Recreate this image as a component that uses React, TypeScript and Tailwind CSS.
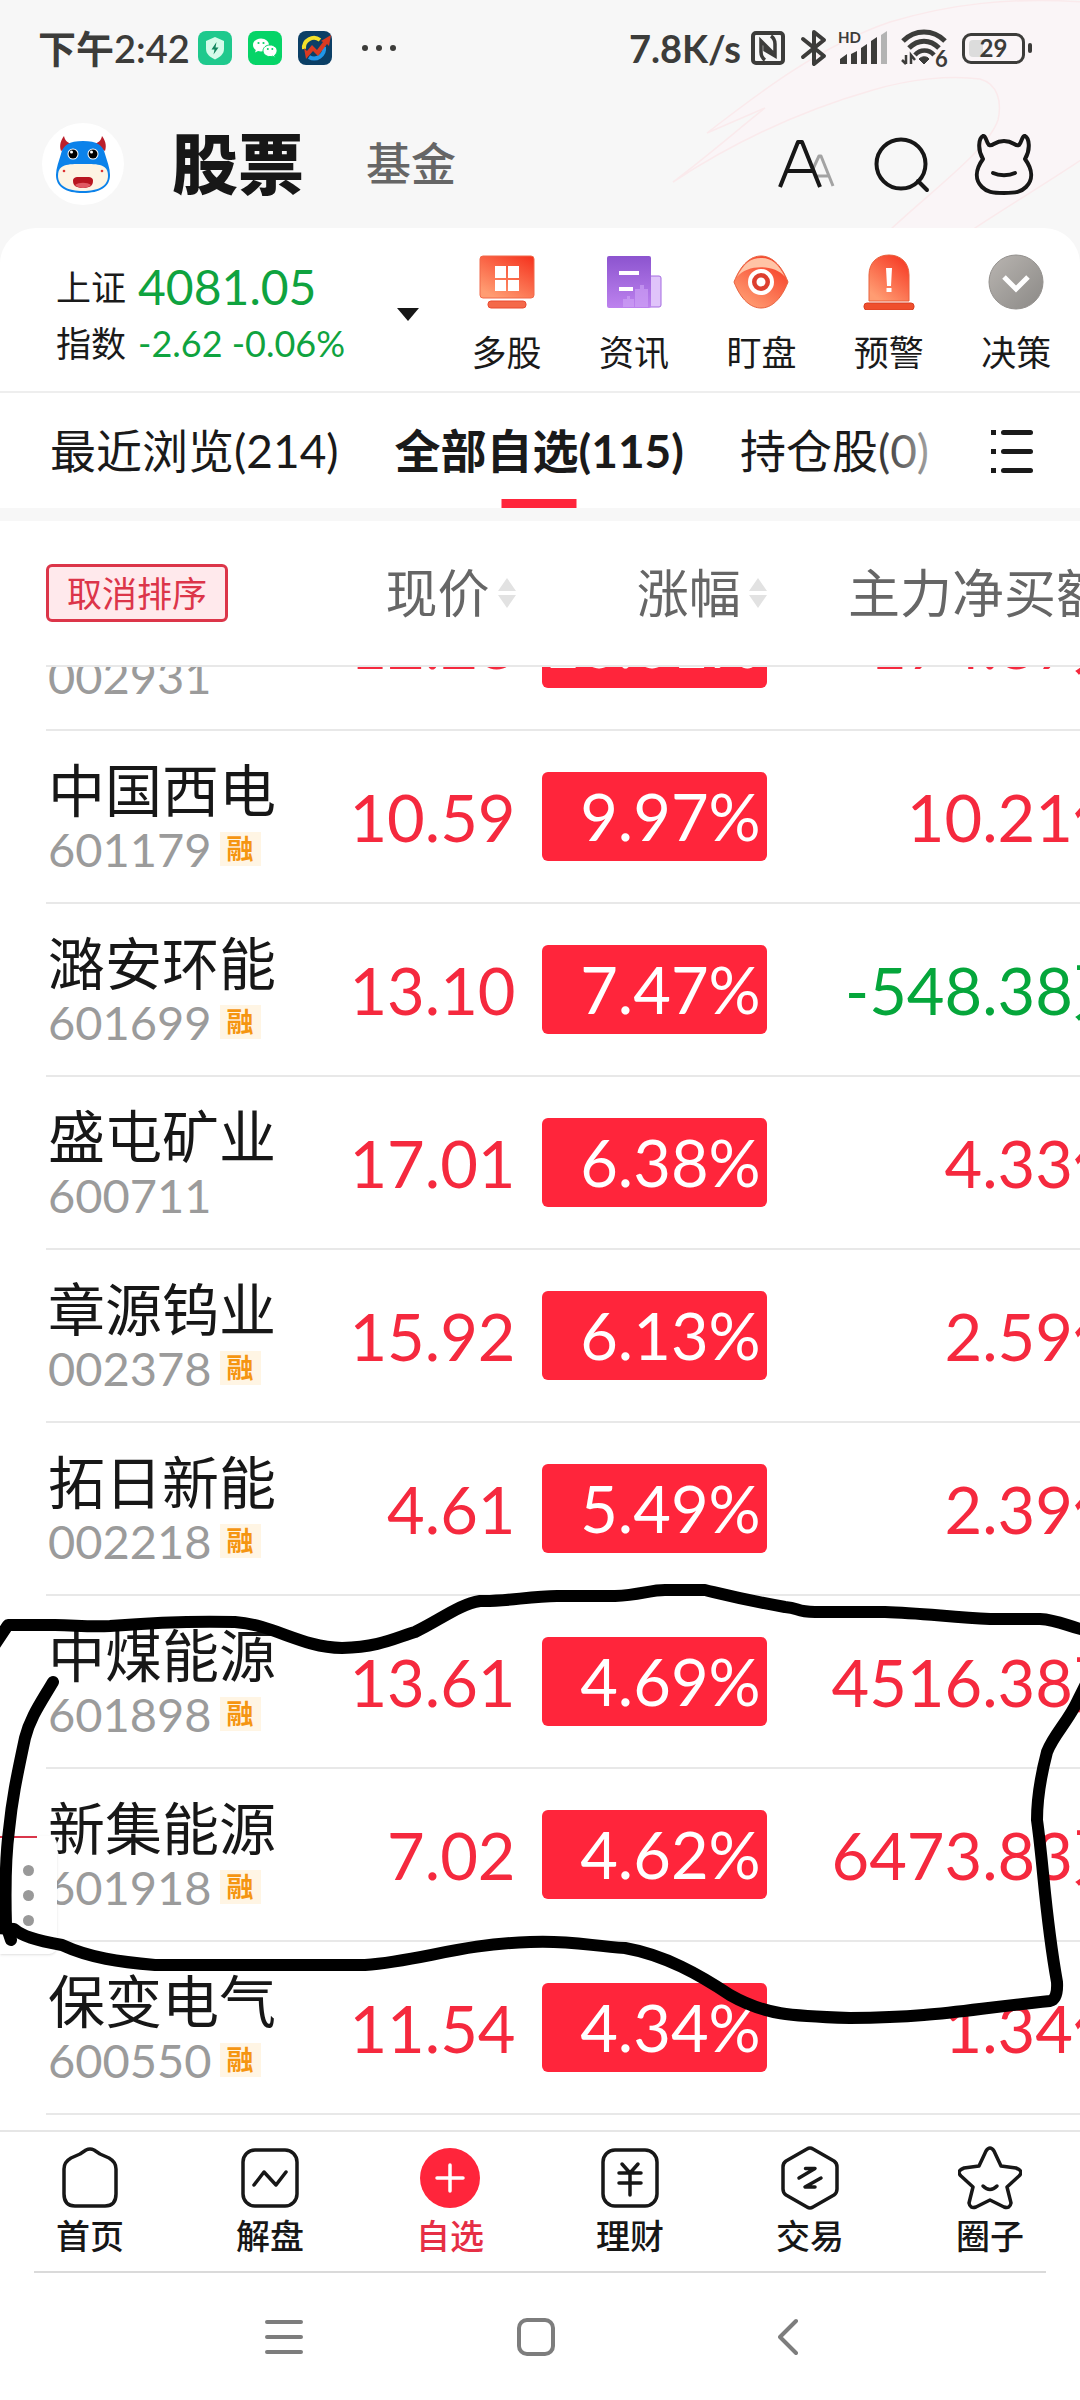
import { useState } from "react";
import type { ReactNode } from "react";
import clsx from "clsx";

type Stock = {
  name: string;
  code: string;
  margin: boolean;
  price: string;
  change: string;
  flow: string;
  out?: boolean;
};

const scrolledStock: Stock = {
  name: "",
  code: "002931",
  margin: false,
  price: "12.28",
  change: "10.01%",
  flow: "174.87万",
};

const stocks: Stock[] = [
  { name: "中国西电", code: "601179", margin: true, price: "10.59", change: "9.97%", flow: "10.21亿" },
  { name: "潞安环能", code: "601699", margin: true, price: "13.10", change: "7.47%", flow: "-548.38万", out: true },
  { name: "盛屯矿业", code: "600711", margin: false, price: "17.01", change: "6.38%", flow: "4.33亿" },
  { name: "章源钨业", code: "002378", margin: true, price: "15.92", change: "6.13%", flow: "2.59亿" },
  { name: "拓日新能", code: "002218", margin: true, price: "4.61", change: "5.49%", flow: "2.39亿" },
  { name: "中煤能源", code: "601898", margin: true, price: "13.61", change: "4.69%", flow: "4516.38万" },
  { name: "新集能源", code: "601918", margin: true, price: "7.02", change: "4.62%", flow: "6473.83万" },
  { name: "保变电气", code: "600550", margin: true, price: "11.54", change: "4.34%", flow: "1.34亿" },
];

const HeaderArt = () => (
  <svg className="absolute top-0 right-0" width="412" height="228" viewBox="668 0 412 228" fill="none">
    <path
      d="M1084 2C1010-3 950 4 890 22C820 46 760 92 707 133L765 108C735 132 705 158 673 182C740 138 810 108 873 90C910 79 950 75 980 79C998 84 1002 102 998 120C988 150 930 192 890 230H972C1010 205 1045 184 1084 158Z"
      fill="#faf5f7"
      stroke="#faeaec"
      strokeWidth="1.5"
    />
  </svg>
);

const StatusBar = () => (
  <div className="relative flex h-24 items-center justify-between pr-[48px] pl-[38px] font-bold text-[#3c3c3a]">
    <div className="flex items-center">
      <span className="text-[38px] leading-[40px] font-semibold">下午2:42</span>
      <svg className="ml-2" width="34" height="34" viewBox="0 0 34 34">
        <rect width="34" height="34" rx="8" fill="#1fc98d" />
        <path d="M17 6l9 4v8c0 5-4 8-9 10.500c-5-2.500-9-5.500-9-10.500v-8z" fill="#d5fbea" />
        <path d="M18.500 11l-5 7.500h3l-1 5l5-7h-3z" fill="#12855e" />
      </svg>
      <svg className="ml-4" width="34" height="34" viewBox="0 0 34 34">
        <rect width="34" height="34" rx="8" fill="#06d467" />
        <path d="M13 7.500c-4.600 0-8 2.900-8 6.500c0 2 1 3.700 2.800 4.900l-.8 2.600l3-1.500c1 .3 2 .4 3 .4c4.600 0 8-2.900 8-6.400s-3.400-6.500-8-6.500z" fill="#fff" />
        <path d="M22 14c-4 0-7 2.600-7 5.800s3 5.800 7 5.800c1 0 1.800-.1 2.600-.4l2.700 1.300l-.7-2.300c1.600-1.100 2.500-2.600 2.500-4.400c0-3.200-3.100-5.800-7.100-5.800z" fill="#fff" stroke="#06d467" />
        <g fill="#06d467">
          <circle cx="10.500" cy="12" r="1.100" />
          <circle cx="15.500" cy="12" r="1.100" />
          <circle cx="19.800" cy="18" r="1" />
          <circle cx="24.300" cy="18" r="1" />
        </g>
      </svg>
      <svg className="ml-4" width="34" height="34" viewBox="0 0 34 34">
        <rect width="34" height="34" rx="8" fill="#0b3f66" />
        <path d="M6 18a10 10 0 0 1 16-9" fill="none" stroke="#f3e12b" strokeWidth="4" />
        <path d="M26 16a10 10 0 0 1-15 10" fill="none" stroke="#2196e8" strokeWidth="4" />
        <path d="M6 17l3 3l5-6l5 5l6-8l-2-1l10-6l-2 11l-2-2l-9 12l-5-5l-7 8z" fill="#d93a22" />
      </svg>
      <svg className="ml-[30px]" width="34" height="8" viewBox="0 0 34 8" fill="#3c3c3a">
        <circle cx="3" cy="4" r="3" />
        <circle cx="17" cy="4" r="3" />
        <circle cx="31" cy="4" r="3" />
      </svg>
    </div>
    <div className="flex items-center">
      <span className="text-[38px] leading-[40px]">7.8K/s</span>
      <svg className="ml-[10px]" width="34" height="34" viewBox="0 0 34 34" fill="none" stroke="#3c3c3a">
        <rect x="2" y="2" width="30" height="30" rx="3" strokeWidth="4" />
        <path d="M14 29c-3-2-4-4-4-8V10l12 12M20 5c3 2 4 4 4 8v12l-10-6v-6" strokeWidth="3.500" />
      </svg>
      <svg className="ml-[15px]" width="28" height="38" viewBox="0 0 28 38" fill="none" stroke="#3c3c3a" strokeWidth="4" strokeLinejoin="round" strokeLinecap="round">
        <path d="M3 10l21 17l-10 8V3l10 8L3 28" />
      </svg>
      <svg className="ml-[10px]" width="50" height="36" viewBox="0 0 50 36" fill="#3c3c3a">
        <text x="0" y="13" className="text-[15px] font-bold">HD</text>
        <path d="M2 34v-5l7-5v10zM13 34V24l6-3v13zM23 34V18l6-4v20zM33 34V11l6-4v27z" />
        <path d="M43 34V5l6-4v33z" fill="#b3b3b3" />
      </svg>
      <svg className="ml-[13px]" width="48" height="40" viewBox="0 0 48 40" fill="none" stroke="#3c3c3a">
        <path d="M2 13c12-12 30-12 42 0" strokeWidth="5" />
        <path d="M8 20c9-9 21-9 30 0" strokeWidth="5" />
        <path d="M14 27c5-6 14-6 19 0" strokeWidth="4.500" />
        <path d="M18 31c3-3 8-3 10 0l-5 5z" fill="#3c3c3a" strokeWidth="1" />
        <path d="M5 27v9M1 32l4 4M10 36v-9l4 5" strokeWidth="2.500" />
        <text x="34" y="39" className="text-[22px] font-bold" fill="#3c3c3a" stroke="none">6</text>
      </svg>
      <div className="ml-[13px] flex h-[31px] w-[63px] items-center rounded-[9px] border-3 border-[#3c3c3a] p-1">
        <div className="relative flex h-full w-full items-center justify-center">
          <span className="absolute inset-y-0 left-0 w-[14px] rounded-l-sm bg-[#dcdcdc]" />
          <span className="relative text-[24px] leading-none">29</span>
        </div>
      </div>
      <span className="ml-[3px] h-[10px] w-1 rounded-sm bg-[#3c3c3a]" />
    </div>
  </div>
);

const Avatar = () => (
  <svg width="82" height="82" viewBox="0 0 82 82">
    <circle cx="41" cy="41" r="41" fill="#fff" />
    <path d="M19 28c-2-6 0-11 3-15c1 5 4 7 8 8zM63 28c2-6 0-11-3-15c-1 5-4 7-8 8z" fill="#bb1f2b" />
    <path d="M41 18C27 18 21 22 19 31C17 38 14 45 14 52C14 64 24 70 41 70S68 64 68 52C68 45 65 38 63 31C61 22 55 18 41 18z" fill="#0b82ea" />
    <path d="M41 41C25 41 16 41 16 53C16 63 26 68 41 68S66 63 66 53C66 41 57 41 41 41z" fill="#fdf4e3" />
    <circle cx="31" cy="31" r="5.500" fill="#fff" />
    <circle cx="51" cy="31" r="5.500" fill="#fff" />
    <circle cx="31" cy="31" r="4.500" />
    <circle cx="51" cy="31" r="4.500" />
    <circle cx="29.500" cy="29" r="1.500" fill="#fff" />
    <circle cx="49.500" cy="29" r="1.500" fill="#fff" />
    <path d="M31 58c0-3 2-4 5-4h10c3 0 5 1 5 4c0 5-4 7-10 7s-10-2-10-7z" fill="#b8161f" />
    <path d="M33 62c4-3 12-3 16 0c-4 4-12 4-16 0z" fill="#e05a62" />
    <circle cx="22" cy="48" r="1.300" fill="#d33" />
    <circle cx="60" cy="48" r="1.300" fill="#d33" />
  </svg>
);

const Header = () => (
  <header className="relative flex h-[132px] items-center justify-between pt-1 pr-[46px] pl-[42px]">
    <div className="flex items-center">
      <button aria-label="我的">
        <Avatar />
      </button>
      <button className="ml-[48px] text-[66px] leading-[72px] font-black text-[#171717]">股票</button>
      <button className="ml-[62px] text-[45px] leading-[72px] font-medium text-[#666]">基金</button>
    </div>
    <div className="flex items-center">
      <button aria-label="字号">
        <svg width="58" height="60" viewBox="0 0 58 60" fill="none" strokeWidth="4" strokeLinejoin="round">
          <path d="M34 37L41 22h2L55 52M38 42h13" stroke="#a3a3a3" strokeWidth="3" />
          <path d="M2 53L20 8h4L42 53M9 37h27" stroke="#171717" />
        </svg>
      </button>
      <button aria-label="搜索" className="ml-[38px]">
        <svg width="58" height="60" viewBox="0 0 58 60" fill="none" stroke="#171717" strokeWidth="4" strokeLinecap="round">
          <circle cx="27" cy="30" r="24.500" />
          <path d="M44 47l9 9" />
        </svg>
      </button>
      <button aria-label="客服" className="ml-[42px]">
        <svg width="60" height="62" viewBox="0 0 60 62" fill="none" stroke="#171717" strokeWidth="4" strokeLinecap="round" strokeLinejoin="round">
          <path d="M15 12C12 9 12 2 9 3C5 5 3 16 9 26C1 37 1 47 8 54C13 59 18 60 30 60S47 59 52 54C59 47 59 37 51 26C57 16 55 5 51 3C48 2 48 9 45 12C41 14 40 8 30 8S19 14 15 12z" />
          <path d="M19 40c6 3 16 3 22 0" />
        </svg>
      </button>
    </div>
  </header>
);

const shortcuts: { label: string; icon: ReactNode }[] = [
  {
    label: "多股",
    icon: (
      <svg width="56" height="56" viewBox="0 0 56 56">
        <rect x="1" y="2" width="54" height="42" rx="3" fill="url(#red)" stroke="#f0694a" />
        <path d="M16 12h11v12H16zM29 12h11v12H29zM16 26h11v11H16zM29 26h11v11H29z" fill="#fff" />
        <rect x="9" y="47" width="38" height="7" rx="3" fill="#f4694a" stroke="#ea4a30" />
      </svg>
    ),
  },
  {
    label: "资讯",
    icon: (
      <svg width="56" height="56" viewBox="0 0 56 56">
        <rect x="42" y="22" width="13" height="31" rx="2" fill="#e0c4fa" stroke="#a46be0" />
        <rect x="1" y="2" width="44" height="52" rx="2" fill="url(#purple)" />
        <path d="M13 17h20v4H13zM13 33h14v4H13z" fill="#fff" />
        <path d="M29 53V35h5v-4h4v4h4v18zM17 53v-8h4v-3h3v3h4v8" fill="#d0a5f6" opacity=".6" />
      </svg>
    ),
  },
  {
    label: "盯盘",
    icon: (
      <svg width="56" height="56" viewBox="0 0 56 56">
        <path d="M1 28C8 10 18 2 28 2S48 10 55 28C48 46 38 54 28 54S8 46 1 28z" fill="url(#red)" stroke="#e8603c" />
        <path d="M4 23C11 9 18 4 28 4S45 9 52 23C42 10 14 10 4 23z" fill="#ffc4a6" />
        <circle cx="28" cy="28" r="11" fill="#dd3f2f" stroke="#fff" strokeWidth="4" />
        <circle cx="28" cy="28" r="4.500" fill="#fff" />
      </svg>
    ),
  },
  {
    label: "预警",
    icon: (
      <svg width="56" height="56" viewBox="0 0 56 56">
        <path d="M8 47V21C8 8 17 1 28 1S48 8 48 21v26z" fill="url(#red)" stroke="#e8603c" />
        <path d="M25 14h6l-1 18h-4zM25.500 34h5v4h-5z" fill="#fff" />
        <rect x="3" y="49" width="50" height="7" rx="3" fill="#ef4f2d" stroke="#d93e22" />
      </svg>
    ),
  },
  {
    label: "决策",
    icon: (
      <svg width="56" height="56" viewBox="0 0 56 56">
        <circle cx="28" cy="28" r="27" fill="url(#gray)" stroke="#93908d" />
        <path d="M16 23l12 12l12-12" fill="none" stroke="#fff" strokeWidth="5" />
      </svg>
    ),
  },
];

const IndexBar = () => (
  <section className="relative flex h-[165px] border-b-2 border-[#eeeeee]">
    <svg className="absolute" width="0" height="0">
      <defs>
        <linearGradient id="red" x1="1" y1="0" x2="0.3" y2="1">
          <stop offset="0" stopColor="#f5301c" />
          <stop offset="1" stopColor="#ff9c72" />
        </linearGradient>
        <linearGradient id="purple" x1="0.5" y1="0" x2="0.5" y2="1">
          <stop offset="0" stopColor="#8c54cf" />
          <stop offset="1" stopColor="#bd82ee" />
        </linearGradient>
        <linearGradient id="gray" x1="0" y1="0" x2="1" y2="1">
          <stop offset="0" stopColor="#b9b5b1" />
          <stop offset="1" stopColor="#8b8986" />
        </linearGradient>
      </defs>
    </svg>
    <button className="flex flex-1 items-center justify-between pt-[10px] pr-[24px] pl-[56px] text-left">
      <span className="grid grid-cols-[auto_auto] items-center gap-x-[12px] text-[35px] leading-[56px] text-[#1a1a1a]">
        <span>上证</span>
        <span className="text-[48px] text-[#0fa33f]">4081.05</span>
        <span>指数</span>
        <span className="text-[36px] text-[#0fa33f]">-2.62 -0.06%</span>
      </span>
      <svg width="22" height="13" viewBox="0 0 22 13">
        <path d="M0 0h22L11 13z" fill="#171717" />
      </svg>
    </button>
    <div className="flex w-[59%] pt-[26px]">
      {shortcuts.map((item) => (
        <button key={item.label} className="flex flex-1 flex-col items-center gap-[18px]">
          {item.icon}
          <span className="text-[35px] leading-[48px] text-[#1a1a1a]">{item.label}</span>
        </button>
      ))}
    </div>
  </section>
);

const tabs = ["最近浏览(214)", "全部自选(115)", "持仓股(0)"];

const Tabs = () => {
  const [active, setActive] = useState(1);
  return (
    <div className="flex h-[115px] items-center justify-between pr-[46px] pl-[50px]">
      <div className="relative flex h-full gap-[56px]">
        {tabs.map((tab, index) => (
          <button
            key={tab}
            onClick={() => setActive(index)}
            className={clsx(
              "relative h-full text-[46px] leading-[60px] whitespace-nowrap text-[#1a1a1a]",
              active === index && "font-bold"
            )}
          >
            {tab}
            {active === index && (
              <span className="absolute bottom-0 left-1/2 h-[9px] w-[75px] -translate-x-1/2 bg-[#ff253b]" />
            )}
          </button>
        ))}
        <span className="pointer-events-none absolute inset-y-0 right-0 w-[60px] bg-linear-to-r from-white/0 to-white/60" />
      </div>
      <button aria-label="分组">
        <svg width="44" height="44" viewBox="0 0 44 44" fill="#1a1a1a">
          <rect x="1" y="1" width="5" height="5" />
          <rect x="1" y="20" width="5" height="5" />
          <rect x="1" y="39" width="5" height="5" />
          <rect x="11" y="1" width="32" height="5" rx="2.500" />
          <rect x="11" y="20" width="32" height="5" rx="2.500" />
          <rect x="11" y="39" width="32" height="5" rx="2.500" />
        </svg>
      </button>
    </div>
  );
};

const SortHead = ({ label }: { label: string }) => (
  <button className="inline-flex items-center gap-[8px] whitespace-nowrap">
    {label}
    <svg width="18" height="30" viewBox="0 0 18 30" fill="#e2e2e2">
      <path d="M9 0l9 13H0zM9 30l9-13H0z" />
    </svg>
  </button>
);

const NameCell = ({ stock }: { stock: Stock }) => (
  <div className="h-[171px] pt-[29px] pl-[2px]">
    <p className="h-[60px] text-[57px] leading-[60px] text-[#171717]">{stock.name}</p>
    <p className="flex items-center gap-[8px] text-[47px] leading-[58px] text-[#9b9b9b]">
      {stock.code}
      {stock.margin && (
        <span className="bg-[#fff5e4] px-[7px] text-[27px] leading-[34px] font-bold text-[#f59511]">融</span>
      )}
    </p>
  </div>
);

const PriceCell = ({ stock }: { stock: Stock }) => (
  <div className="flex h-[171px] items-center justify-end">{stock.price}</div>
);

const ChangeCell = ({ stock }: { stock: Stock }) => (
  <div className="flex h-[171px] items-center justify-end">
    <span className="w-[225px] rounded-md bg-[#ff253b] pr-[6px] text-right leading-[89px] text-white">{stock.change}</span>
  </div>
);

const FlowCell = ({ stock }: { stock: Stock }) => (
  <div className={clsx("flex h-[171px] items-center justify-end whitespace-nowrap", stock.out && "text-[#05a63b]")}>
    {stock.flow}
  </div>
);

const cells = [NameCell, PriceCell, ChangeCell, FlowCell];

const StockTable = () => (
  <div className="relative overflow-hidden bg-white pl-[46px]">
    <table className="w-full min-w-[1092px] table-fixed">
      <thead>
        <tr className="h-[145px] border-b-2 border-[#e8e8e8] text-right text-[52px] text-[#666]">
          <th className="w-[22%]">
            <button className="block rounded-md border-3 border-[#dc3549] bg-[#ffe9ec] px-[18px] text-[35px] leading-[52px] font-normal text-[#dc3549]">
              取消排序
            </button>
          </th>
          <th className="w-[21%] font-normal">
            <SortHead label="现价" />
          </th>
          <th className="w-[23%] font-normal">
            <SortHead label="涨幅" />
          </th>
          <th className="w-[34%] pr-1 font-normal">
            <SortHead label="主力净买额" />
          </th>
        </tr>
      </thead>
      <tbody className="text-[65px] leading-[72px] text-[#f5293e]">
        {/* row scrolled halfway under the head */}
        <tr className="border-b-2 border-[#e8e8e8]">
          {cells.map((Cell, index) => (
            <td key={index} className="p-0">
              <div className="flex h-[62px] flex-col justify-end overflow-hidden *:shrink-0">
                <Cell stock={scrolledStock} />
              </div>
            </td>
          ))}
        </tr>
        {stocks.map((stock) => (
          <tr key={stock.code} className="border-b-2 border-[#e8e8e8]">
            {cells.map((Cell, index) => (
              <td key={index} className="p-0">
                <Cell stock={stock} />
              </td>
            ))}
          </tr>
        ))}
      </tbody>
    </table>
    <div className="absolute top-[1315px] left-0 flex h-[118px] w-[57px] flex-col items-center justify-center gap-[14px] rounded-r-lg bg-white shadow-sm">
      <span className="size-[11px] rounded-full bg-[#999]" />
      <span className="size-[11px] rounded-full bg-[#999]" />
      <span className="size-[11px] rounded-full bg-[#999]" />
      <span className="absolute top-0 left-0 h-[2px] w-[37px] bg-[#d9364a]" />
    </div>
    {/* hand-drawn mark round the two coal stocks */}
    <svg
      className="pointer-events-none absolute top-[1059px] left-0 h-[448px] w-full"
      viewBox="0 1580 1080 448"
      preserveAspectRatio="none"
      fill="none"
      stroke="#000"
      strokeWidth="12"
      strokeLinecap="round"
      strokeLinejoin="round"
    >
      <path d="M-6 1646L8 1625H55C75 1625 85 1627 110 1626C160 1622 200 1621 235 1622C275 1625 300 1647 342 1648C380 1647 395 1638 415 1632C440 1620 460 1604 480 1601C505 1602 530 1596 557 1596H615C640 1595 650 1590 665 1590H705C730 1596 745 1600 785 1607C800 1608 795 1612 815 1612H885C920 1613 950 1617 990 1619H1040C1060 1620 1070 1628 1090 1631" />
      <path d="M53 1682C40 1704 30 1718 25 1738C16 1780 12 1800 9 1830C5 1860 5 1890 6 1925L11 1940" />
      <path d="M-4 1928L14 1929C22 1936 35 1940 62 1945C90 1958 120 1962 155 1965H365C420 1961 460 1944 530 1942C570 1940 590 1946 625 1948C665 1955 700 1975 730 1995C765 2015 790 2016 850 2018C940 2017 960 2010 1050 2001Q1058 1999 1057 1982C1045 1915 1044 1870 1037 1820C1037 1795 1041 1775 1047 1752C1054 1734 1068 1722 1078 1700L1086 1684" />
    </svg>
  </div>
);

const line = {
  width: 64,
  height: 64,
  viewBox: "0 0 64 64",
  fill: "none",
  stroke: "#171717",
  strokeWidth: 3.5,
  strokeLinecap: "round",
  strokeLinejoin: "round",
} as const;

const navItems: { label: string; icon: ReactNode }[] = [
  {
    label: "首页",
    icon: (
      <svg {...line}>
        <path d="M28 4Q32 2 36 4L42 8L51 12Q58 16 58 23V48Q58 60 47 60H17Q6 60 6 48V23Q6 16 13 12L22 8z" />
      </svg>
    ),
  },
  {
    label: "解盘",
    icon: (
      <svg {...line}>
        <rect x="5" y="4" width="54" height="56" rx="12" />
        <path d="M16 39L26 26L38 39L48 26" />
      </svg>
    ),
  },
  {
    label: "自选",
    icon: (
      <svg {...line}>
        <circle cx="32" cy="32" r="30" fill="#ff253b" stroke="none" />
        <path d="M32 19v26M19 32h26" stroke="#fff" />
      </svg>
    ),
  },
  {
    label: "理财",
    icon: (
      <svg {...line}>
        <rect x="5" y="4" width="54" height="56" rx="12" />
        <path d="M24 18l8 9l8-9M21 27h22M21 37h22M32 27v22" />
      </svg>
    ),
  },
  {
    label: "交易",
    icon: (
      <svg {...line}>
        <path d="M29 3Q32 1 35 3L56 15Q59 17 59 21V43Q59 47 56 49L35 61Q32 63 29 61L8 49Q5 47 5 43V21Q5 17 8 15z" />
        <path d="M21 32L37 22.500H27.500M43 32L27 41H37" />
      </svg>
    ),
  },
  {
    label: "圈子",
    icon: (
      <svg {...line}>
        <path d="M28 5Q32 -1 36 5L43 20L58 22Q66 25 61 30L49 41L53 57Q52 63 46 61L32 54L18 61Q12 63 11 57L15 41L3 30Q-2 25 6 22L21 20z" />
        <path d="M25 40q7 7 14 0" />
      </svg>
    ),
  },
];

const BottomNav = () => {
  const [active, setActive] = useState("自选");
  return (
    <nav className="flex border-t-2 border-[#e6e6e6] bg-white pt-[14px] pb-[11px]">
      {navItems.map((item) => (
        <button
          key={item.label}
          onClick={() => setActive(item.label)}
          className={clsx(
            "flex flex-1 flex-col items-center gap-[2px] text-[34px] leading-[48px] font-medium",
            active === item.label ? "text-[#e62f45]" : "text-[#171717]"
          )}
        >
          {item.icon}
          {item.label}
        </button>
      ))}
    </nav>
  );
};

const SystemNav = () => (
  <div className="flex grow flex-col bg-white">
    <div className="mx-[34px] h-[2px] bg-[#dadada]" />
    <div className="flex h-[128px] items-center justify-center pr-[8px]">
      <button aria-label="最近任务" className="flex w-[252px] justify-center">
        <svg width="38" height="38" viewBox="0 0 38 38" stroke="#7d7d7d" strokeWidth="4" strokeLinecap="round">
          <path d="M2 4h34M2 19h34M2 34h34" />
        </svg>
      </button>
      <button aria-label="主屏幕" className="flex w-[252px] justify-center">
        <svg width="38" height="38" viewBox="0 0 38 38" fill="none" stroke="#7d7d7d" strokeWidth="4">
          <rect x="2" y="2" width="34" height="34" rx="8" />
        </svg>
      </button>
      <button aria-label="返回" className="flex w-[252px] justify-center">
        <svg width="20" height="38" viewBox="0 0 20 38" fill="none" stroke="#7d7d7d" strokeWidth="4" strokeLinecap="round" strokeLinejoin="round">
          <path d="M18 3L2 19l16 16" />
        </svg>
      </button>
    </div>
  </div>
);

const App = () => (
  <div className="relative flex min-h-screen flex-col overflow-hidden bg-[#f7f7f7] font-['Lato','Noto_Sans_CJK_SC',sans-serif]">
    <HeaderArt />
    <StatusBar />
    <Header />
    <div className="relative rounded-t-[36px] bg-white">
      <IndexBar />
      <Tabs />
    </div>
    <div className="h-[13px]" />
    <StockTable />
    <div className="h-[15px] bg-white" />
    <BottomNav />
    <SystemNav />
  </div>
);

export default App;
